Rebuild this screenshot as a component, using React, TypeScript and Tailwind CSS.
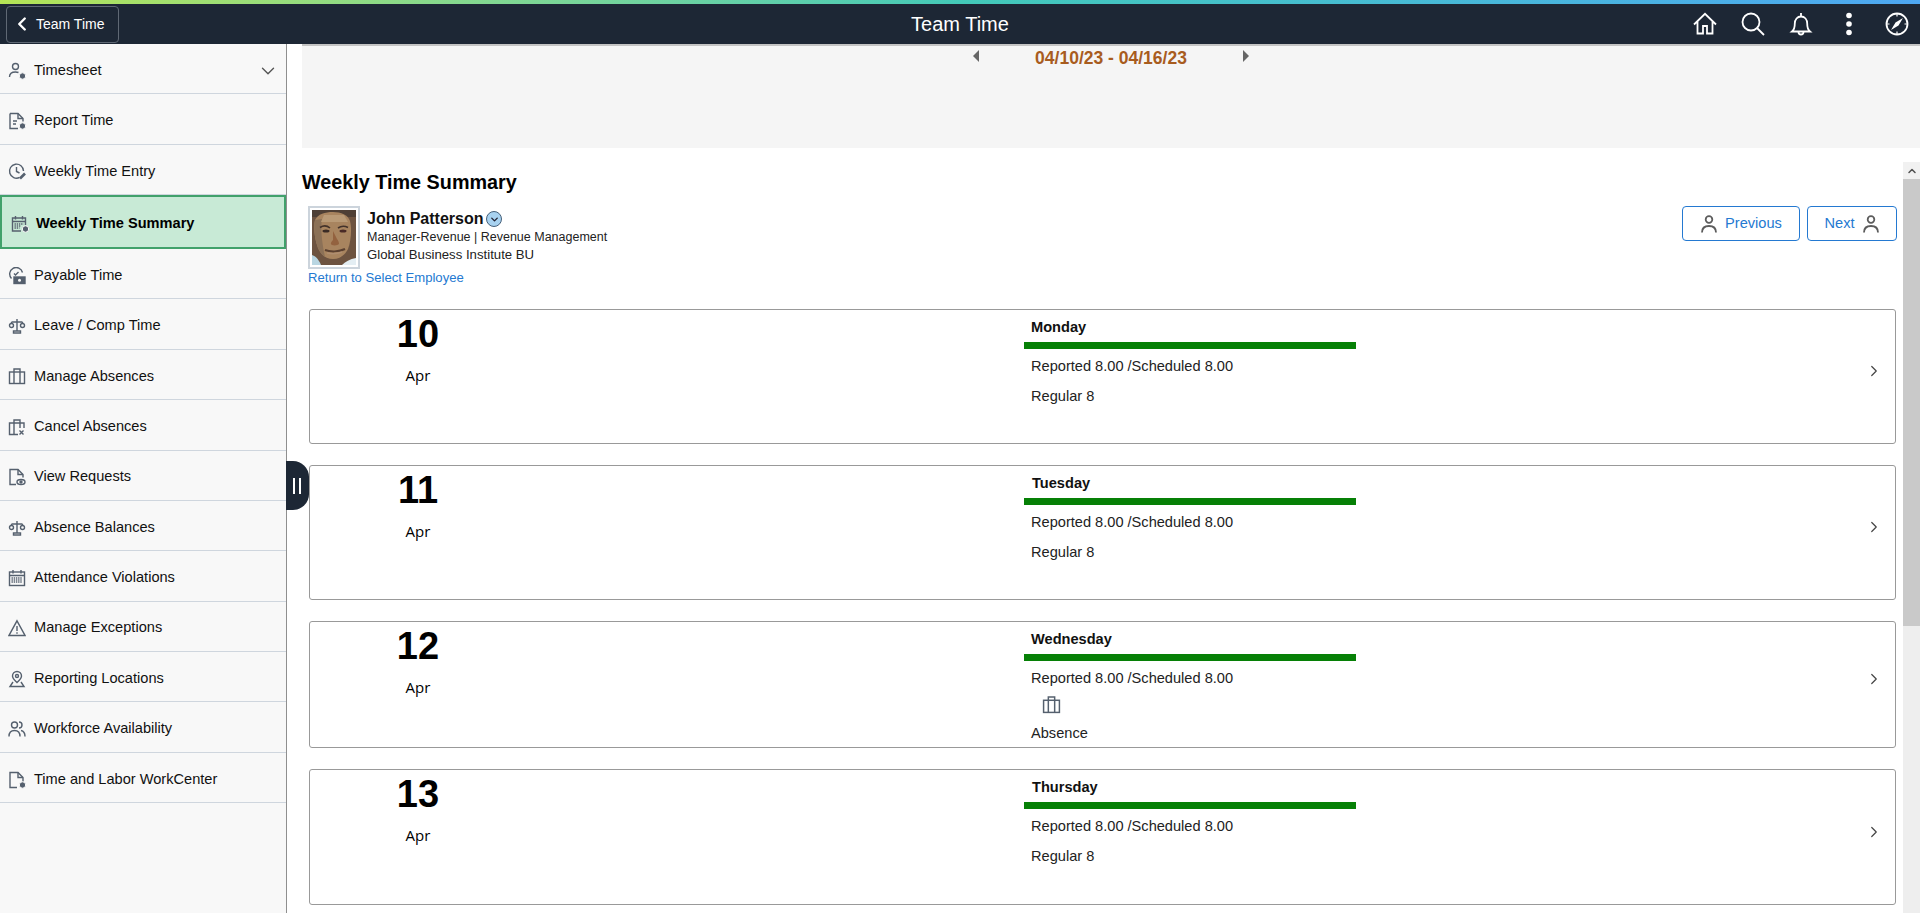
import { ChevronDown, ChevronLeft, ChevronRight, ChevronUp } from 'lucide-react';

const ink = '#55606e';

function IconBase({ children, className = 'size-[18px]' }: { children: React.ReactNode; className?: string }) {
  return (
    <svg viewBox="0 0 18 18" fill="none" stroke={ink} strokeWidth="1.4" className={className}>
      {children}
    </svg>
  );
}

const badge = <circle cx="14.5" cy="14" r="3.2" fill={ink} stroke="#f8f8f8" strokeWidth="1" />;

function Scale() {
  return (
    <IconBase>
      <path d="M9 2v12M5.5 16h7v-2h-7zM3.5 5h11" />
      <circle cx="3.5" cy="8.5" r="2" />
      <circle cx="14.5" cy="8.5" r="2" />
      <path d="M3.5 5v1.5M14.5 5v1.5" />
    </IconBase>
  );
}

function Briefcase({ className }: { className?: string }) {
  return (
    <IconBase className={className}>
      <rect x="1.5" y="5" width="15" height="11.5" />
      <path d="M6 16.5V2h6v14.5" />
    </IconBase>
  );
}

const menuIcons: Record<string, React.ReactNode> = {
  Timesheet: (
    <IconBase>
      <circle cx="7.5" cy="4.5" r="3" />
      <path d="M1.5 15c0-3.5 2.5-5 6-5 1 0 2 .1 3 .5" />
      {badge}
    </IconBase>
  ),
  'Report Time': (
    <IconBase>
      <path d="M2 1.5h8l5 5v3M2 1.5v15h8" />
      <path d="M10 1.5v5h5M5 9h4M5 12h3" />
      {badge}
    </IconBase>
  ),
  'Weekly Time Entry': (
    <IconBase>
      <path d="M11.5 15.5A7 7 0 1 1 15.5 9" />
      <path d="M8.5 5v4.5l3 1.5" />
      <path d="M12 16.5l5-5" strokeWidth="2.6" />
    </IconBase>
  ),
  'Weekly Time Summary': (
    <IconBase>
      <path d="M10 16H1.5V3h13v7" />
      <path d="M1.5 6.5h13M4.5 1v3.5M11.5 1v3.5" />
      <path d="M3.5 9h9M3.5 11h6M3.5 13h5" strokeDasharray="1.4 .8" />
      {badge}
    </IconBase>
  ),
  'Payable Time': (
    <IconBase>
      <path d="M3.5 11.5a6.5 6.5 0 1 1 11-6" />
      <path d="M6 6.5 7.5 8l3-3" />
      <rect x="6" y="10" width="11" height="6.5" fill={ink} />
      <circle cx="11.5" cy="13.2" r="1.5" fill="#f8f8f8" stroke="none" />
    </IconBase>
  ),
  'Leave / Comp Time': <Scale />,
  'Manage Absences': <Briefcase />,
  'Cancel Absences': (
    <IconBase>
      <path d="M10 16.5H1.5V5H16v5" />
      <path d="M6 16.5V2h6v8M11.5 12.5l4 4M15.5 12.5l-4 4" />
    </IconBase>
  ),
  'View Requests': (
    <IconBase>
      <path d="M8 16.5H2v-15h8l5 5v3" />
      <path d="M10 1.5v5h5" />
      <ellipse cx="13" cy="14" rx="4" ry="2.5" />
      <circle cx="13" cy="14" r="1" fill={ink} />
    </IconBase>
  ),
  'Absence Balances': <Scale />,
  'Attendance Violations': (
    <IconBase>
      <rect x="1.5" y="3" width="15" height="13.5" />
      <path d="M1.5 6.5h15M5 1v3.5M13 1v3.5" />
      <path d="M3.5 9h11M3.5 11h11M3.5 13h11" strokeDasharray="1.4 .8" />
    </IconBase>
  ),
  'Manage Exceptions': (
    <IconBase>
      <path d="M9 1.8 17 16.5H1z" />
      <path d="M9 7v5M9 13.3v1.5" />
    </IconBase>
  ),
  'Reporting Locations': (
    <IconBase>
      <path d="M9 12.5C6.5 10 4.5 8.5 4.5 6a4.5 4.5 0 0 1 9 0c0 2.5-2 4-4.5 6.5z" />
      <circle cx="9" cy="6" r="1.5" />
      <path d="M5 12 2 16.5h14L13 12" />
    </IconBase>
  ),
  'Workforce Availability': (
    <IconBase>
      <circle cx="6.5" cy="5" r="3" />
      <path d="M1 16.5c0-4 2-6 5.5-6s5.500 2 5.500 6M11 2a3 3 0 0 1 0 6M13 10.5c2.5.5 4 2.5 4 6" />
    </IconBase>
  ),
  'Time and Labor WorkCenter': (
    <IconBase>
      <path d="M9 16.5H2v-15h8l5 5v4" />
      <path d="M10 1.5v5h5" />
      {badge}
    </IconBase>
  ),
};

const menu = [
  'Timesheet',
  'Report Time',
  'Weekly Time Entry',
  'Weekly Time Summary',
  'Payable Time',
  'Leave / Comp Time',
  'Manage Absences',
  'Cancel Absences',
  'View Requests',
  'Absence Balances',
  'Attendance Violations',
  'Manage Exceptions',
  'Reporting Locations',
  'Workforce Availability',
  'Time and Labor WorkCenter',
];

function PersonIcon() {
  return (
    <svg viewBox="0 0 18 18" fill="none" stroke="#5c5c5c" strokeWidth="1.8" className="size-[18px]">
      <circle cx="9" cy="4.5" r="3.3" />
      <path d="M2 17.5c0-5 2.5-6.500 7-6.500s7 1.500 7 6.500" />
    </svg>
  );
}

function HeaderIcons() {
  return (
    <div className="flex items-center gap-[24px] pr-[11px] text-white">
      <svg viewBox="0 0 24 24" fill="none" stroke="currentColor" strokeWidth="1.8" className="size-[24px]">
        <path d="M1 12.5 12 1.8l11 10.700M4.500 9.500v12h5.500V14h4v7.500h5.500v-12" />
      </svg>
      <svg viewBox="0 0 24 24" fill="none" stroke="currentColor" strokeWidth="1.8" className="size-[24px]">
        <circle cx="10" cy="10" r="8.5" />
        <path d="m16 16 7 7" />
      </svg>
      <svg viewBox="0 0 24 24" fill="none" stroke="currentColor" strokeWidth="1.8" className="size-[24px]">
        <path d="M3 19.5c2.500-2 2.800-4 2.800-8 0-4 2.500-7 6.200-7s6.200 3 6.200 7c0 4 .3 6 2.800 8z" />
        <path d="M9.5 20a2.500 2.500 0 0 0 5 0M12 1v3" />
      </svg>
      <svg viewBox="0 0 24 24" fill="currentColor" className="size-[24px]">
        <circle cx="12" cy="3.5" r="2.8" />
        <circle cx="12" cy="12" r="2.8" />
        <circle cx="12" cy="20.5" r="2.8" />
      </svg>
      <svg viewBox="0 0 24 24" fill="none" stroke="currentColor" strokeWidth="1.8" className="size-[24px]">
        <circle cx="12" cy="12" r="10.5" />
        <path d="M18 6 13.5 13.5 6 18 10.500 10.500z" fill="currentColor" stroke="none" />
        <path d="M12 2v2.500M12 19.500V22M2 12h2.500M19.500 12H22" strokeWidth="1.2" />
      </svg>
    </div>
  );
}

// no image files available, so the employee photo is painted roughly
function Portrait() {
  return (
    <svg viewBox="0 0 44 55" className="block h-full w-full">
      <rect width="44" height="55" fill="#6d5340" />
      <rect width="44" height="7" fill="#4e3f35" />
      <path d="M3 10c3-6 10-8 18-8s15 3 17 9c2 8 1 20-2 28-3 6-8 10-15 10S9 45 6 38C3 30 1 18 3 10z" fill="#a8845f" />
      <path d="M3 10C1 18 3 30 6 38c2 4 4 7 7 9-2-10-5-26-3-38z" fill="#8c7157" />
      <path d="M12 5h20l4 7H9z" fill="#b99a76" />
      <path d="M8 17.5c3-2 7-2 10 .5M26 18c3-2 7-2 10-.5" stroke="#43322a" strokeWidth="1.6" fill="none" />
      <ellipse cx="14" cy="21" rx="3.5" ry="1.5" fill="#3a2b25" />
      <ellipse cx="31" cy="21" rx="3.5" ry="1.5" fill="#4a2a26" />
      <path d="M21 21v9c-2 2-3 4-1 5 3 1 6 0 7-1 0-2-1-4-2-5z" fill="#93623f" />
      <path d="M13 40c5 2 14 2 20-1" stroke="#5b4030" strokeWidth="2" fill="none" />
      <path d="M15 43c5 1 10 1 15-1" stroke="#b08e70" strokeWidth="1.5" fill="none" />
      <path d="M0 45c3 1 6 3 9 10H0z" fill="#b9d6e2" />
      <path d="M30 55c3-3 8-6 14-7v7z" fill="#e4eef3" />
    </svg>
  );
}

type Day = { num: string; name: string; nameInset: string; extra: 'regular' | 'absence'; cardHeight: string };

const days: Day[] = [
  { num: '10', name: 'Monday', nameInset: 'pl-[7px]', extra: 'regular', cardHeight: 'h-[135px]' },
  { num: '11', name: 'Tuesday', nameInset: 'pl-[8px]', extra: 'regular', cardHeight: 'h-[135px]' },
  { num: '12', name: 'Wednesday', nameInset: 'pl-[7px]', extra: 'absence', cardHeight: 'h-[127px]' },
  { num: '13', name: 'Thursday', nameInset: 'pl-[8px]', extra: 'regular', cardHeight: 'h-[136px]' },
];

function DayCard({ day }: { day: Day }) {
  return (
    <div className={`flex ${day.cardHeight} items-start rounded-[3px] border border-[#999] bg-white`}>
      <div className="flex w-[216px] flex-col items-center pt-[2px]">
        <span className="text-[38px] leading-[44px] font-bold text-black">{day.num}</span>
        <span className="mt-[9px] text-[15px] leading-[20px] text-black [font-family:'Open_Sans','Liberation_Sans',sans-serif]">Apr</span>
      </div>
      <div className="ml-[498px] w-[332px] pt-[8px]">
        <p className={`${day.nameInset} text-[14.6px] leading-[18px] font-bold text-[#111]`}>{day.name}</p>
        <div className="mt-[6px] h-[7px] bg-[#068006]" />
        <p className="mt-[8px] pl-[7px] text-[14.6px] leading-[18px] text-[#222]">Reported 8.00 /Scheduled 8.00</p>
        {day.extra === 'regular' ? (
          <p className="mt-[12px] pl-[7px] text-[14.6px] leading-[18px] text-[#222]">Regular 8</p>
        ) : (
          <div className="pl-[7px]">
            <div className="mt-[8px] pl-[11px]">
              <Briefcase className="size-[19px]" />
            </div>
            <p className="mt-[10px] text-[14.6px] leading-[18px] text-[#222]">Absence</p>
          </div>
        )}
      </div>
      <div className="ml-auto flex h-full items-center pr-[12px] pb-[11px]">
        <ChevronRight className="size-[18px] text-[#444]" strokeWidth={1.6} />
      </div>
    </div>
  );
}

export default function App() {
  return (
    <div className="flex h-[913px] w-[1920px] flex-col overflow-hidden bg-white text-[14.6px] [font-family:'Liberation_Sans',Arial,sans-serif]">
      <div className="h-[4px] bg-gradient-to-r from-[#b4e455] via-[#43c9b8] to-[#4ea7f2]" />
      <header className="relative flex h-[40px] items-center justify-between bg-[#1d2735] pl-[6px]">
        <button type="button" className="flex h-[37px] w-[113px] items-center rounded-[4px] border border-[#5f6874] pl-[4px] text-[14px] text-white">
          <ChevronLeft className="size-[22px]" strokeWidth={2.6} />
          <span className="ml-[3px]">Team Time</span>
        </button>
        <h1 className="absolute left-1/2 -translate-x-1/2 text-[20px] text-white">Team Time</h1>
        <HeaderIcons />
      </header>

      <div className="relative flex min-h-0 flex-1">
        <nav className="w-[287px] shrink-0 border-r border-r-[#8f8f8f] bg-[#f8f8f8]">
          {menu.map((item) => {
            const selected = item === 'Weekly Time Summary';
            return (
              <div
                key={item}
                className={
                  selected
                    ? 'flex h-[53.8px] items-center border-2 border-[#41a16b] bg-[#c8ead6] pt-[4px] pl-[9px] font-bold text-black'
                    : 'flex h-[50.4px] items-center border-b border-b-[#cfd6de] pt-[4px] pl-[8px] text-[#111]'
                }
              >
                <span className={selected ? 'flex w-[25px] shrink-0' : 'flex w-[26px] shrink-0'}>{menuIcons[item]}</span>
                <span>{item}</span>
                {item === 'Timesheet' && <ChevronDown className="mr-[7px] ml-auto size-[22px] text-[#555]" strokeWidth={1.5} />}
              </div>
            );
          })}
        </nav>

        <button type="button" className="absolute top-[417px] left-[286px] z-10 flex h-[49px] w-[23px] items-center justify-center rounded-r-[16px] bg-[#1d2735] pr-[1px]">
          <span className="h-[16px] w-[8px] border-x-2 border-x-white" />
        </button>

        <main className="flex min-w-0 flex-1 flex-col pl-[15px]">
          <div className="flex h-[104px] shrink-0 justify-center border-t-2 border-t-[#c4c4c4] bg-[#f5f5f5]">
            <div className="flex h-[24px] items-center">
              <span className="mb-[4px] h-0 w-0 border-y-[6px] border-r-[6px] border-y-transparent border-r-[#666]" />
              <span className="mx-[56px] pt-[1px] text-[17.5px] font-bold text-[#a85c1e]">04/10/23 - 04/16/23</span>
              <span className="mb-[4px] h-0 w-0 border-y-[6px] border-l-[6px] border-y-transparent border-l-[#666]" />
            </div>
          </div>

          <div className="flex min-h-0 flex-1">
            <div className="min-w-0 flex-1 pt-[22px]">
              <h2 className="text-[19.8px] leading-[24px] font-bold text-black">Weekly Time Summary</h2>
              <div className="mt-[12px] flex items-start justify-between pr-[6px] pl-[6px]">
                <div>
                  <div className="flex">
                    <div className="h-[63px] w-[52px] border-2 border-[#ccd4dc] p-[2px]">
                      <Portrait />
                    </div>
                    <div className="ml-[7px] pt-[3px]">
                      <div className="flex items-center text-[16px] leading-[20px] font-bold text-[#111]">
                        John Patterson
                        <span className="ml-[3px] flex size-[16px] items-center justify-center rounded-full border border-[#46607a] bg-[#a8d2f0]">
                          <ChevronDown className="size-[11px] text-[#223]" strokeWidth={3} />
                        </span>
                      </div>
                      <p className="text-[12.5px] leading-[17px] text-[#222]">Manager-Revenue | Revenue Management</p>
                      <p className="text-[13.2px] leading-[17px] text-[#222]">Global Business Institute BU</p>
                    </div>
                  </div>
                  <a className="mt-[1px] block text-[13.1px] leading-[16px] text-[#2479d1]">Return to Select Employee</a>
                </div>
                <div className="flex gap-[7px]">
                  <button type="button" className="flex h-[35px] w-[118px] items-center justify-center gap-[7px] rounded-[4px] border border-[#2479d1] pt-[1px] text-[#2479d1]">
                    <PersonIcon />
                    Previous
                  </button>
                  <button type="button" className="flex h-[35px] w-[90px] items-center justify-center gap-[7px] rounded-[4px] border border-[#2479d1] pt-[1px] text-[#2479d1]">
                    Next
                    <PersonIcon />
                  </button>
                </div>
              </div>

              <div className="mt-[23px] flex flex-col gap-[21px] pr-[7px] pl-[7px]">
                {days.map((day) => (
                  <DayCard key={day.num} day={day} />
                ))}
              </div>
            </div>

            <div className="mt-[14px] flex w-[17px] shrink-0 flex-col">
              <div className="flex h-[17px] items-center justify-center bg-[#f1f1f1]">
                <ChevronUp className="size-[12px] text-[#505050]" strokeWidth={3} />
              </div>
              <div className="flex-1 bg-[#eeeeee]">
                <div className="h-[447px] bg-[#c9c9c9]" />
              </div>
            </div>
          </div>
        </main>
      </div>
    </div>
  );
}
